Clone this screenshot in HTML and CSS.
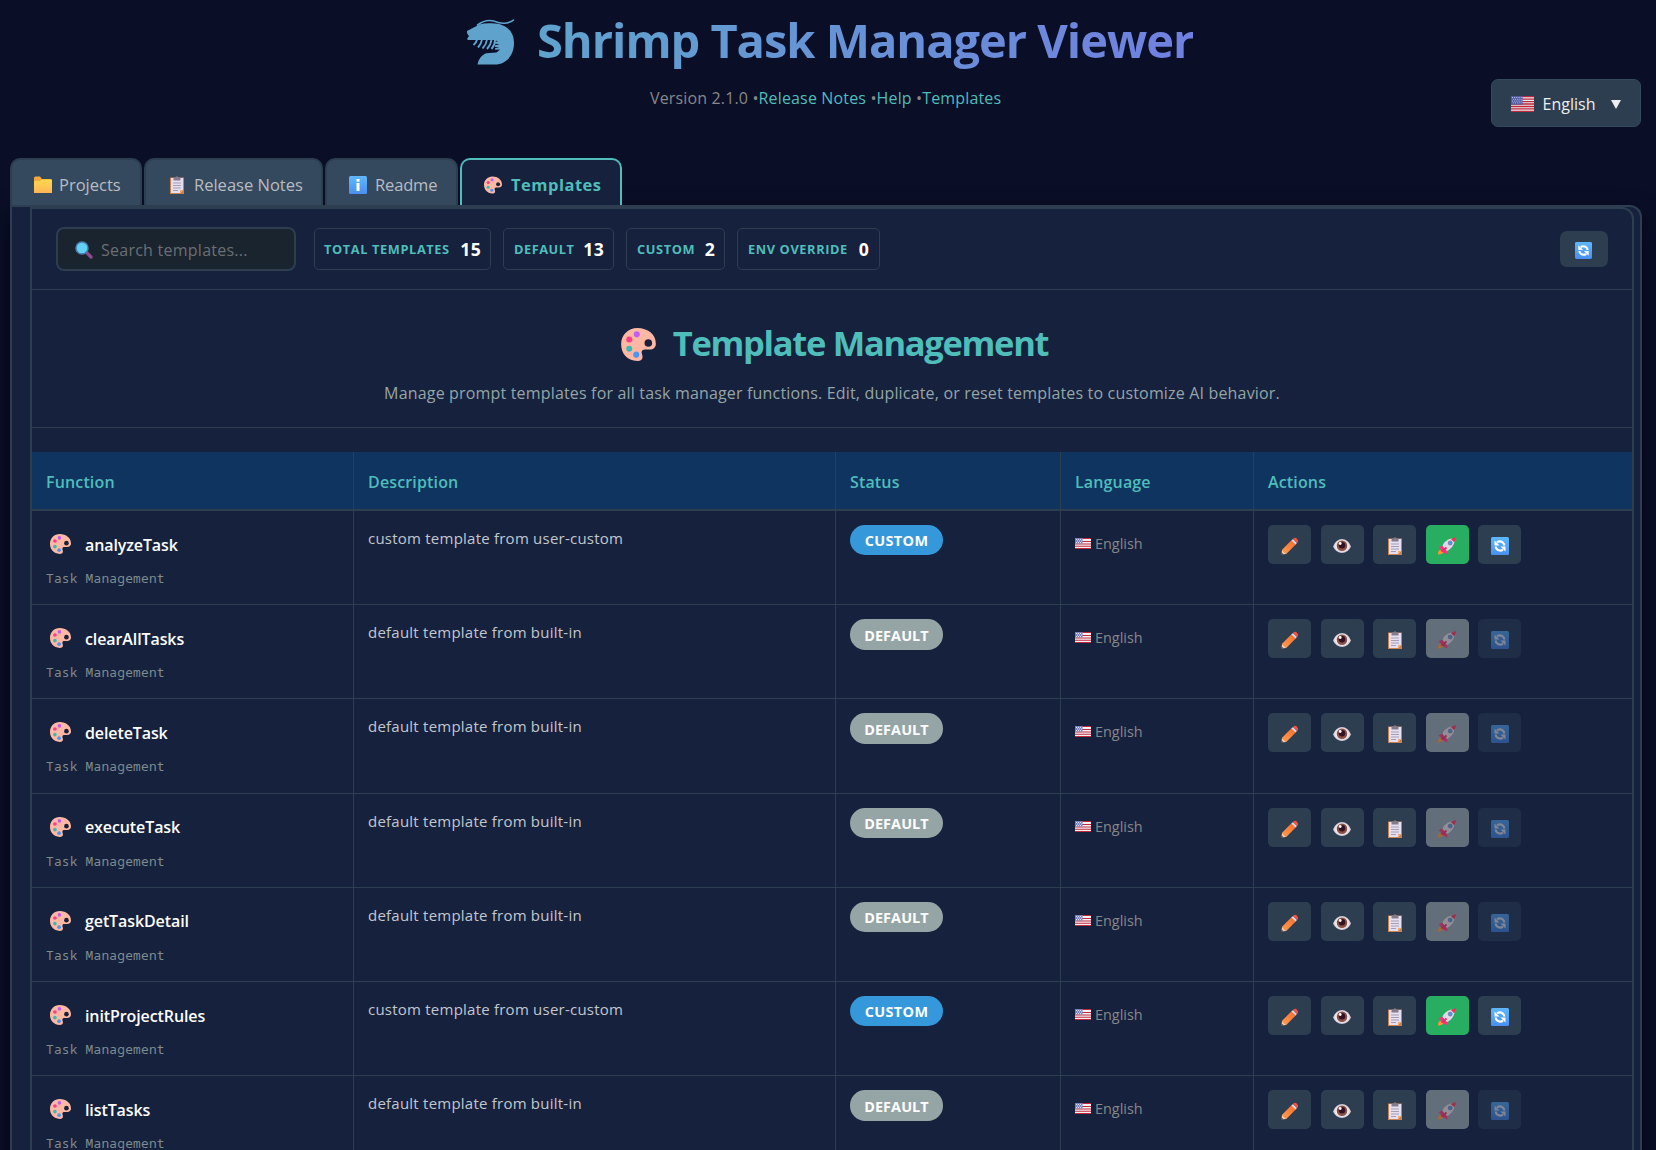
FILE: index.html
```html
<!DOCTYPE html>
<html lang="en">
<head>
<meta charset="utf-8">
<title>Shrimp Task Manager Viewer</title>
<link rel="stylesheet" href="styles.css">
</head>
<body>
<svg class="defs" width="0" height="0" aria-hidden="true">
  <defs>
    <linearGradient id="gFolder" x1="0" y1="0" x2="0" y2="1"><stop offset="0" stop-color="#ffd94f"/><stop offset="1" stop-color="#ffb455"/></linearGradient>
    <linearGradient id="gBlue" x1="0" y1="0" x2="0" y2="1"><stop offset="0" stop-color="#5fb8ff"/><stop offset="1" stop-color="#4a8ff0"/></linearGradient>
    <linearGradient id="gPencil" x1="0" y1="1" x2="1" y2="0"><stop offset="0" stop-color="#ffa050"/><stop offset="1" stop-color="#f8682c"/></linearGradient>
    <radialGradient id="gEye"><stop offset=".55" stop-color="#fff"/><stop offset="1" stop-color="#c9bfd0"/></radialGradient>
    <symbol id="palette" viewBox="1 2 30 28.500"><path fill="#ffb8a3" d="M15 2C7 2 1 8 1 16c0 8 5 14 14 14.500c3 0 4.500-1.500 4.500-3.500 0-1.800-.8-2.600-.8-4 0-1.600 1-2.500 3-2.500h4c3 0 5.300-1.700 5.300-5C31 7.500 24 2 15 2z"/><circle cx="24.500" cy="15" r="3.300" fill="#1b2038"/><circle cx="14.500" cy="7.500" r="2.600" fill="#c45cf0"/><circle cx="8" cy="12" r="2.600" fill="#fb3d8c"/><circle cx="8" cy="20" r="2.600" fill="#39b9b4"/><circle cx="14" cy="25" r="2.600" fill="#4a94f2"/></symbol>
    <symbol id="folder" viewBox="0 0 18 18"><path fill="#f5a93c" d="M0 2q0-1.500 1.500-1.500H6L8 3h8.500Q18 3 18 4.500V17H0z"/><path fill="url(#gFolder)" d="M0 6q0-1 1-1h5l2-1.500h9q1 0 1 1V16q0 1-1 1H1q-1 0-1-1z"/></symbol>
    <symbol id="clip" viewBox="0 0 16 18"><path fill="#ca8350" d="M1 1.500h14V18H1z"/><path fill="#e6dff0" d="M2 2h12v12l-3 3H2z"/><path fill="#f1a76b" d="M11 17v-3h3z"/><path fill="#857b8e" d="M4.500 1.500h2Q8-.8 9.500 1.500h2v3h-7z"/><path stroke="#a79db4" d="M4 7h8M4 9.500h8M4 12h8M4 14.500h5"/></symbol>
    <symbol id="info" viewBox="0 0 18 18"><rect width="18" height="18" rx="1.500" fill="url(#gBlue)"/><path fill="#fff" d="M7.500 3h3v2.800h-3zM7.500 7h3v8h-3z"/></symbol>
    <symbol id="search" viewBox="0 0 18 18"><path stroke="#8d4b8d" stroke-width="3.200" stroke-linecap="round" d="M12 12l4 4"/><circle cx="7" cy="7" r="6" fill="#62d2f4" stroke="#4a80b4" stroke-width="1.500"/></symbol>
    <symbol id="refresh" viewBox="0 0 18 18"><rect width="18" height="18" rx="1.500" fill="url(#gBlue)"/><path fill="none" stroke="#fff" stroke-width="2.200" d="M6 5.300Q9 3.600 11.600 5.300 13.200 6.400 13.300 8.500M12 12.700Q9 14.400 6.400 12.700 4.800 11.600 4.700 9.500"/><path fill="#fff" d="M3.500 3.500v5h5zM14.500 14.500v-5h-5z"/></symbol>
    <symbol id="pencil" viewBox="0 0 18 18"><path fill="url(#gPencil)" d="M.8 13L11 2.800l4.200 4.200L5 17.200z"/><path fill="#ded6e8" d="M10.500 3.500L12 2l4 4-1.500 1.500z"/><path fill="#f4523f" d="M12 2l1-1q1.500-1 3 .8t1 3.200l-1 1z"/><path fill="#ffc9a6" d="M1 13l4 4-4.500.6z"/><path fill="#3d3850" d="M.7 15.500l1.700 1.700-2 .5z"/></symbol>
    <symbol id="eye" viewBox="0 0 18 18"><path fill="url(#gEye)" d="M0 9.500Q3 2 9 2t9 7.500Q15 16 9 16T0 9.500z"/><circle cx="9" cy="8.800" r="5.300" fill="#8c5145"/><circle cx="9" cy="8.300" r="3.200" fill="#321225"/><circle cx="7.200" cy="6.500" r="1.400" fill="#fff"/></symbol>
    <symbol id="rocket" viewBox="0 0 18 18"><path fill="#ff9633" d="M0 17.500q0-4 2.500-5l3 3q-2 2.200-5.500 2z"/><path fill="#e0d8e8" d="M3.500 11Q6 3 14 1.300l2.700 2.700Q15.500 11.500 7.500 14.800z"/><path fill="#f52f57" d="M12.800 1.900q3-1.400 5.200-1.700Q17.500 3 16.200 5.200z"/><circle cx="12.200" cy="6" r="2" fill="#4f9be8" stroke="#6a6190" stroke-width=".6"/><path fill="#f5357a" d="M.5 10.500L4 8.500l5 5.500.5 3.500-3-1.500L3 14.500l-.5-2.800z"/><path stroke="#e02c66" stroke-width="1.800" d="M4.500 14l4-3.500"/></symbol>
    <symbol id="flag" viewBox="0 0 26 18" preserveAspectRatio="none"><rect width="26" height="18" rx="1" fill="#ecebee"/><path stroke="#c0283c" stroke-width="1.500" d="M0 .75h26M0 3.500h26M0 6.300h26M0 9h26M0 11.800h26M0 14.500h26M0 17.250h26"/><path fill="#5058a2" d="M0 0h13v9.700H0z"/><path stroke="#c2c7ea" stroke-width="1.100" stroke-dasharray="1.200 1.300" d="M1 1.700h11.500M2 3.700h10.500M1 5.700h11.500M2 7.700h10.500"/></symbol>
    <symbol id="flag-sm" viewBox="0 0 16 11"><rect width="16" height="11" rx="1" fill="#f4f2f5"/><path stroke="#c0283c" stroke-width="1.100" d="M0 .5h16M0 3.500h16M0 6h16M0 8.200h16M0 10.500h16"/><path fill="#7a80be" d="M0 0h7.500v5.500H0z"/><path stroke="#dfe1f3" stroke-dasharray="1 1" d="M1 1.500h6M2 3h5M1 4.500h6"/></symbol>
  </defs>
</svg>

<header class="header">
  <h1 class="title">
    <svg class="logo" viewBox="0 0 48 46"><path fill="none" stroke="#5fa3cd" stroke-width="1.600" stroke-linecap="round" d="M11 6Q19 0 27 2q8 3 13 2 5-1 7-3"/><path fill="#5fa3cd" d="M.5 12L13 5.500Q17 4 25 4.200C39 4.200 47.500 12 47.500 24S40 45.500 28 45.500H11q1-7 7-10.500 3-1.500 12-1.500l3.500-3-5 .2v-1.400l4.500-1-4.500-.4v-1.600l4.500-.8-4.500-1v-1.600l3-.6-4-1.300H1.500L.5 20l2-3q-2.500-1.500-2-5z"/><path fill="none" stroke="#5fa3cd" stroke-width="1.900" d="M10.500 20.500q-.5 3-3.500 5.500M15.500 20.500q-.5 4-4 8M20.500 20.500q-.5 4.500-4.500 9M25 20.500q-.5 5-4.500 9.500M28.500 21q0 5-3.500 9"/></svg>
    <span class="title-text">Shrimp Task Manager Viewer</span>
  </h1>
  <p class="version"><span>Version 2.1.0 •</span><a>Release Notes</a><span> •</span><a>Help</a><span> •</span><a>Templates</a></p>
  <button class="lang-switch"><svg class="flag-lg"><use href="#flag"/></svg><span>English</span><i class="caret"></i></button>
</header>

<nav class="tabs">
  <div class="tab t-projects"><svg><use href="#folder"/></svg><span>Projects</span></div>
  <div class="tab t-notes"><svg><use href="#clip"/></svg><span>Release Notes</span></div>
  <div class="tab t-readme"><svg><use href="#info"/></svg><span>Readme</span></div>
  <div class="tab t-templates active"><svg><use href="#palette"/></svg><span>Templates</span></div>
</nav>

<main class="outer">
  <section class="inner">
    <div class="toolbar">
      <div class="search"><svg><use href="#search"/></svg><span>Search templates...</span></div>
      <div class="stat s-total"><span>TOTAL TEMPLATES</span><b>15</b></div>
      <div class="stat s-default"><span>DEFAULT</span><b>13</b></div>
      <div class="stat s-custom"><span>CUSTOM</span><b>2</b></div>
      <div class="stat s-env"><span>ENV OVERRIDE</span><b>0</b></div>
      <button class="reload"><svg><use href="#refresh"/></svg></button>
    </div>
    <div class="intro">
      <h2><svg><use href="#palette"/></svg><span>Template Management</span></h2>
      <p>Manage prompt templates for all task manager functions. Edit, duplicate, or reset templates to customize AI behavior.</p>
    </div>
    <div class="table">
      <div class="row head"><div>Function</div><div>Description</div><div>Status</div><div>Language</div><div>Actions</div></div>

      <div class="row">
        <div class="fn"><div class="name"><svg><use href="#palette"/></svg><span>analyzeTask</span></div><div class="cat">Task Management</div></div>
        <div class="desc">custom template from user-custom</div>
        <div><span class="badge custom">CUSTOM</span></div>
        <div class="lang"><svg><use href="#flag-sm"/></svg>English</div>
        <div class="actions"><button><svg><use href="#pencil"/></svg></button><button><svg><use href="#eye"/></svg></button><button><svg><use href="#clip"/></svg></button><button class="go"><svg><use href="#rocket"/></svg></button><button><svg><use href="#refresh"/></svg></button></div>
      </div>

      <div class="row">
        <div class="fn"><div class="name"><svg><use href="#palette"/></svg><span>clearAllTasks</span></div><div class="cat">Task Management</div></div>
        <div class="desc">default template from built-in</div>
        <div><span class="badge">DEFAULT</span></div>
        <div class="lang"><svg><use href="#flag-sm"/></svg>English</div>
        <div class="actions"><button><svg><use href="#pencil"/></svg></button><button><svg><use href="#eye"/></svg></button><button><svg><use href="#clip"/></svg></button><button class="off-go"><svg><use href="#rocket"/></svg></button><button class="off"><svg><use href="#refresh"/></svg></button></div>
      </div>

      <div class="row">
        <div class="fn"><div class="name"><svg><use href="#palette"/></svg><span>deleteTask</span></div><div class="cat">Task Management</div></div>
        <div class="desc">default template from built-in</div>
        <div><span class="badge">DEFAULT</span></div>
        <div class="lang"><svg><use href="#flag-sm"/></svg>English</div>
        <div class="actions"><button><svg><use href="#pencil"/></svg></button><button><svg><use href="#eye"/></svg></button><button><svg><use href="#clip"/></svg></button><button class="off-go"><svg><use href="#rocket"/></svg></button><button class="off"><svg><use href="#refresh"/></svg></button></div>
      </div>

      <div class="row">
        <div class="fn"><div class="name"><svg><use href="#palette"/></svg><span>executeTask</span></div><div class="cat">Task Management</div></div>
        <div class="desc">default template from built-in</div>
        <div><span class="badge">DEFAULT</span></div>
        <div class="lang"><svg><use href="#flag-sm"/></svg>English</div>
        <div class="actions"><button><svg><use href="#pencil"/></svg></button><button><svg><use href="#eye"/></svg></button><button><svg><use href="#clip"/></svg></button><button class="off-go"><svg><use href="#rocket"/></svg></button><button class="off"><svg><use href="#refresh"/></svg></button></div>
      </div>

      <div class="row">
        <div class="fn"><div class="name"><svg><use href="#palette"/></svg><span>getTaskDetail</span></div><div class="cat">Task Management</div></div>
        <div class="desc">default template from built-in</div>
        <div><span class="badge">DEFAULT</span></div>
        <div class="lang"><svg><use href="#flag-sm"/></svg>English</div>
        <div class="actions"><button><svg><use href="#pencil"/></svg></button><button><svg><use href="#eye"/></svg></button><button><svg><use href="#clip"/></svg></button><button class="off-go"><svg><use href="#rocket"/></svg></button><button class="off"><svg><use href="#refresh"/></svg></button></div>
      </div>

      <div class="row">
        <div class="fn"><div class="name"><svg><use href="#palette"/></svg><span>initProjectRules</span></div><div class="cat">Task Management</div></div>
        <div class="desc">custom template from user-custom</div>
        <div><span class="badge custom">CUSTOM</span></div>
        <div class="lang"><svg><use href="#flag-sm"/></svg>English</div>
        <div class="actions"><button><svg><use href="#pencil"/></svg></button><button><svg><use href="#eye"/></svg></button><button><svg><use href="#clip"/></svg></button><button class="go"><svg><use href="#rocket"/></svg></button><button><svg><use href="#refresh"/></svg></button></div>
      </div>

      <div class="row">
        <div class="fn"><div class="name"><svg><use href="#palette"/></svg><span>listTasks</span></div><div class="cat">Task Management</div></div>
        <div class="desc">default template from built-in</div>
        <div><span class="badge">DEFAULT</span></div>
        <div class="lang"><svg><use href="#flag-sm"/></svg>English</div>
        <div class="actions"><button><svg><use href="#pencil"/></svg></button><button><svg><use href="#eye"/></svg></button><button><svg><use href="#clip"/></svg></button><button class="off-go"><svg><use href="#rocket"/></svg></button><button class="off"><svg><use href="#refresh"/></svg></button></div>
      </div>
    </div>
  </section>
</main>
</body>
</html>
```
FILE: styles.css
```css
* { box-sizing: border-box; }
html { height: 100%; overflow: hidden; }
body {
  margin: 0; height: 1150px; overflow: hidden; padding: 0 14px 0 10px;
  background: #0a0e27; color: #eee;
  font: 16px/1.36 "Open Sans", "Noto Sans", sans-serif;
}
h1, h2, p { margin: 0; }
button { font: inherit; color: inherit; border: 0; padding: 0; margin: 0; }
svg { display: block; flex: none; }
.defs { position: absolute; }

.header { position: relative; height: 158px; }
.title { display: flex; align-items: flex-start; padding: 8px 0 0 456px; height: 84px; }
.logo { width: 49px; height: 46px; margin-top: 11px; }
.title-text {
  margin-left: 22px; font-size: 47px; line-height: 65px; font-weight: 700;
  letter-spacing: -1.020px; white-space: nowrap;
  background: linear-gradient(90deg, #5fa3cd, #7080e0);
  -webkit-background-clip: text; background-clip: text; color: transparent;
}
.version { padding-left: 640px; line-height: 28px; color: #888; white-space: pre; letter-spacing: .150px; }
.version a { color: #4fbdba; }
.lang-switch {
  position: absolute; right: 1px; top: 79px; width: 150px; height: 48px;
  display: flex; align-items: center; padding: 2px 0 0 19px;
  background: #2c3e50; border: 1px solid #34495e; border-radius: 7px;
}
.flag-lg { width: 23px; height: 16px; margin-right: 8px; }
.lang-switch span { width: 54px; margin-top: 1px; }
.caret { margin-left: 15px; border: 5px solid transparent; border-top: 9px solid #eee; border-bottom: 0; }

.tabs { display: flex; height: 47px; gap: 2px; }
.tab {
  display: flex; align-items: center; padding: 5px 0 0 22px; height: 47px;
  background: #34495e; border: 2px solid #2c3e50; border-bottom: 0;
  border-radius: 10px 10px 0 0; color: #b8bcc2; white-space: nowrap; font-size: 16.500px;
}
.tab svg { width: 18px; height: 18px; margin-right: 7px; }
.tab span { margin-top: 1px; }
.t-projects { width: 132px; }
.t-notes { width: 179px; }
.t-notes svg { margin-right: 8px; }
.t-readme { width: 133px; letter-spacing: -.150px; }
.t-readme svg { margin-right: 8px; }
.t-templates { width: 161.500px; letter-spacing: .5px; }
.t-templates svg { margin-right: 9px; }
.tab.active { background: #16213e; border-color: #4fbdba; color: #4fbdba; font-weight: 700; }

.outer {
  width: 1632px; height: 1000px; padding: 0 6px 0 18px;
  background: #16213e; border: 2px solid #2c3e50; border-radius: 0 12px 0 0;
  box-shadow: 0 8px 24px rgba(0, 0, 0, .45);
}
.inner { border: 2px solid #2c3e50; border-radius: 0 12px 0 0; height: 1000px; }

.toolbar { display: flex; align-items: center; height: 81px; padding: 0 24px; border-bottom: 1px solid #2c3e50; }
.search {
  width: 240px; height: 44px; margin-right: 18px; padding: 2px 0 0 17px;
  display: flex; align-items: center; background: #1a242e;
  border: 2px solid #2c3e50; border-radius: 8px; color: #6a6f74; letter-spacing: .250px;
}
.search svg { width: 18px; height: 18px; margin-right: 8px; }
.search span { margin-top: 1px; }
.stat {
  display: flex; align-items: center; justify-content: space-between; height: 42px;
  padding: 2px 9px 0 9px; margin-right: 12px; border: 1px solid #2c3e50; border-radius: 5px; white-space: nowrap;
}
.stat span { color: #4fbdba; font-size: 12.800px; font-weight: 700; letter-spacing: .6px; }
.stat b { color: #fff; font-size: 17.600px; letter-spacing: .3px; }
.s-total { width: 177px; }
.s-default { width: 111px; padding-left: 10px; }
.s-default span { letter-spacing: .5px; }
.s-custom { width: 99px; padding-left: 10px; }
.s-env { width: 143px; padding-left: 10px; }
.s-env b { margin-right: 1px; }
.reload { width: 48px; height: 36px; margin-left: auto; display: grid; place-items: center; padding: 2px 2px 0 0; background: #2c3e50; border-radius: 7px; }
.reload svg { width: 17px; height: 17px; }

.intro { height: 138px; border-bottom: 1px solid #2c3e50; padding-top: 27px; text-align: center; }
.intro h2 { display: flex; justify-content: center; align-items: center; height: 52px; font-size: 34.500px; color: #4fbdba; padding-left: 5px; }
.intro h2 svg { width: 35px; height: 33px; margin: 3px 17px 0 0; }
.intro h2 span { letter-spacing: -1.320px; }
.intro p { margin-top: 14px; color: #95a5a6; letter-spacing: .170px; }

.table { margin-top: 24px; }
.row { display: grid; grid-template-columns: 322px 482px 225px 193px 1fr; height: 94.200px; border-bottom: 1px solid #2c3e50; }
.row > div { padding: 14px 0 0 14px; border-right: 1px solid #2c3e50; }
.row > div:last-child { border-right: 0; }
.head { height: 59px; background: #0f3460; color: #4fbdba; font-weight: 600; border-bottom-width: 2px; }
.row.head > div { padding-top: 20px; letter-spacing: .150px; }
.name { display: flex; align-items: center; height: 40px; padding-left: 4px; color: #fff; font-weight: 600; }
.name svg { width: 21px; height: 20px; margin-right: 14px; margin-top: -2px; }
.name span { margin-top: 1px; letter-spacing: -.1px; }
.cat { margin-top: 4px; font: 12.800px/18px "Noto Sans Mono", "DejaVu Sans Mono", monospace; letter-spacing: .240px; color: #7f8c8d; }
.desc { color: #c3c7cd; font-size: 15px; line-height: 26px; letter-spacing: .230px; }
.badge {
  display: flex; align-items: center; justify-content: center; width: 93px; height: 30.400px; padding-top: 2px;
  border-radius: 15.200px; background: #95a5a6; color: #fff; font-size: 14.400px; font-weight: 700; letter-spacing: .1px;
}
.badge.custom { background: #3498db; letter-spacing: .4px; }
.row > .lang { display: flex; align-items: flex-start; font-size: 14.400px; line-height: 38px; color: #888; }
.lang svg { width: 16px; height: 11px; margin: 13px 4px 0 0; }
.actions { display: flex; gap: 9.600px; }
.actions button { width: 43px; height: 39px; display: grid; place-items: center; padding-top: 3px; background: #2c3e50; border-radius: 5px; }
.actions svg { width: 18px; height: 18px; }
.actions .go { background: #27ae60; }
.actions .off-go { background: #636e7b; }
.actions .off-go svg { opacity: .8; filter: brightness(.7); }
.actions .off { opacity: .45; }
```
